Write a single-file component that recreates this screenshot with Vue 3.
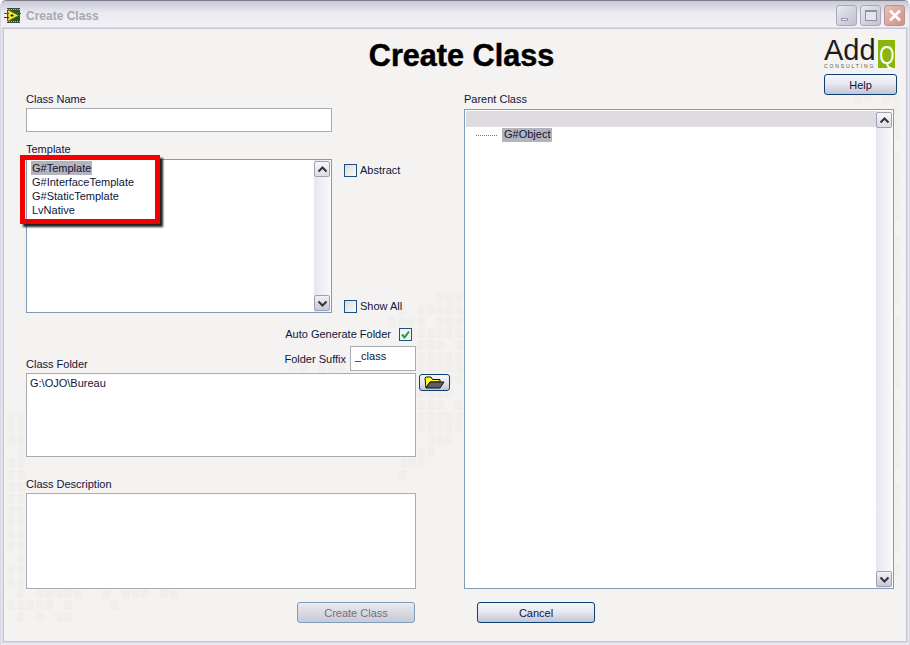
<script setup>
// faint square texture of the dialog background, on a 9.5 x 11.8 px grid
const ORIGIN_X = 4
const ORIGIN_Y = 29
const cells = [
  [98, [858, 868, 887, 896]],
  [298, [440, 449, 459]],
  [310, [402, 421, 431, 440, 449, 459]],
  [322, [392, 402, 411, 421, 440, 449, 459]],
  [333, [411, 421, 431, 440, 449, 459]],
  [345, [421, 431, 440, 459]],
  [357, [421, 431, 440, 449, 459]],
  [368, [293, 303, 322, 332, 341, 421, 431, 440, 449, 459]],
  [380, [449, 459]],
  [393, [421, 431, 440, 449]],
  [405, [421, 431, 440, 459]],
  [417, [11, 21, 421, 431, 440, 449, 459]],
  [428, [11, 21, 421, 431, 440, 449, 459]],
  [440, [11, 21, 431, 440, 449]],
  [452, [21, 421, 431]],
  [463, [11, 21, 403, 412, 421]],
  [475, [11, 21, 403]],
  [487, [11, 21]],
  [499, [11, 21]],
  [511, [11, 21]],
  [522, [11, 21]],
  [534, [11, 21]],
  [546, [11, 21]],
  [558, [21]],
  [570, [11, 21]],
  [582, [11, 21]],
  [593, [21, 40, 49, 59, 68, 78, 106, 126, 136, 145, 164, 174]],
  [605, [11, 21, 30, 40, 49, 68, 115]],
  [617, [21, 40, 59, 68]]
]
const squares = []
for (const [cy, xs] of cells) {
  for (const cx of xs) squares.push({ x: cx - 4 - ORIGIN_X, y: cy - 5 - ORIGIN_Y })
}
for (let m = 0; m < 40; m++) {
  if (m % 7 !== 3) squares.push({ x: 896 - 4 - ORIGIN_X, y: 110 + m * 11.8 - 5 - ORIGIN_Y })
}
</script>

<template>
  <div class="window">
    <header class="titlebar">
      <svg class="appicon" width="17" height="15" viewBox="0 0 17 15">
        <rect x="3" y="0" width="13" height="15" fill="#444" />
        <path d="M3 1.5 H16 M3 13.5 H16" stroke="#bbb" stroke-width="1" stroke-dasharray="1 1" />
        <rect x="4" y="2" width="11" height="11" fill="#2a5a20" />
        <path d="M4 2 L14.5 7.5 L4 13 Z" fill="#f4e53a" stroke="#8a7c00" stroke-width=".6" />
        <path d="M0 5.5 H5 M12 5.5 H17" stroke="#e01010" stroke-width="1.2" />
        <path d="M0 9.5 H5" stroke="#1020e0" stroke-width="1.2" />
        <path d="M6.5 7.5 H9.5 M8 6 V9" stroke="#222" stroke-width="1" />
      </svg>
      <span class="wintitle">Create Class</span>
      <div class="winbuttons">
        <span class="winbtn"><i class="min"></i></span>
        <span class="winbtn"><i class="max"></i></span>
        <span class="winbtn close">
          <svg width="14" height="13" viewBox="0 0 14 13"><path d="M2 1.5 L12 11.5 M12 1.5 L2 11.5" stroke="#fff" stroke-width="2.6" /></svg>
        </span>
      </div>
    </header>

    <main class="client">
      <svg class="pattern" width="902" height="613">
        <rect v-for="(s, i) in squares" :key="i" :x="s.x" :y="s.y" width="8" height="10" rx="1" fill="#f0efec" />
      </svg>

      <div class="top">
        <h1>Create Class</h1>
        <div class="brand">
          <div class="logo">
            <div class="logo-word">
              <span class="add">Add</span>
              <span class="consulting">CONSULTING</span>
            </div>
            <div class="q"><span>Q</span></div>
          </div>
          <button class="btn help">Help</button>
        </div>
      </div>

      <div class="form">
        <section class="left">
          <label class="lbl">Class Name</label>
          <div class="input name"></div>

          <label class="lbl tpl-label">Template</label>
          <div class="tpl-row">
            <div class="list">
              <ul>
                <li><span class="sel">G#Template</span></li>
                <li>G#InterfaceTemplate</li>
                <li>G#StaticTemplate</li>
                <li>LvNative</li>
              </ul>
              <div class="scroll">
                <span class="sbtn"><svg width="11" height="7" viewBox="0 0 11 7"><path d="M1.5 5.5 L5.5 1.5 L9.5 5.5" fill="none" stroke="#333" stroke-width="2" /></svg></span>
                <span class="sbtn down"><svg width="11" height="7" viewBox="0 0 11 7"><path d="M1.5 1.5 L5.5 5.5 L9.5 1.5" fill="none" stroke="#333" stroke-width="2" /></svg></span>
              </div>
              <div class="callout"></div>
            </div>
            <div class="side">
              <div class="check"><span class="box"></span><span>Abstract</span></div>
              <div class="check"><span class="box"></span><span>Show All</span></div>
            </div>
          </div>

          <div class="folder-opts">
            <div class="auto">
              <span>Auto Generate Folder</span>
              <span class="box checked">
                <svg width="11" height="11" viewBox="0 0 11 11"><path d="M2 5.5 L4.5 8.5 L9 2.5" fill="none" stroke="#1f9a3a" stroke-width="2" /></svg>
              </span>
            </div>
            <div class="suffix-row">
              <label class="lbl">Class Folder</label>
              <div class="suffix">
                <span>Folder Suffix</span>
                <div class="input suffix-input">_class</div>
              </div>
            </div>
          </div>

          <div class="folder-row">
            <div class="input folder">G:\OJO\Bureau</div>
            <button class="btn browse">
              <svg width="21" height="13" viewBox="0 0 21 13">
                <path d="M2 12 L1 2 L2 1 H7 L8.5 3.5 H16 V6 H6 Z" fill="#ffff20" stroke="#111" stroke-width="1" />
                <path d="M2 12 L6 6 H20 L16 12 Z" fill="#5f5f5f" stroke="#111" stroke-width="1" />
              </svg>
            </button>
          </div>

          <label class="lbl desc-label">Class Description</label>
          <div class="input desc"></div>

          <div class="create-row"><button class="btn disabled">Create Class</button></div>
        </section>

        <section class="right">
          <label class="lbl">Parent Class</label>
          <div class="tree">
            <div class="tree-body">
              <div class="tree-head"></div>
              <div class="node"><span class="dots"></span><span class="sel">G#Object</span></div>
            </div>
            <div class="scroll">
              <span class="sbtn"><svg width="11" height="7" viewBox="0 0 11 7"><path d="M1.5 5.5 L5.5 1.5 L9.5 5.5" fill="none" stroke="#333" stroke-width="2" /></svg></span>
              <span class="sbtn down"><svg width="11" height="7" viewBox="0 0 11 7"><path d="M1.5 1.5 L5.5 5.5 L9.5 1.5" fill="none" stroke="#333" stroke-width="2" /></svg></span>
            </div>
          </div>
          <div class="cancel-row"><button class="btn">Cancel</button></div>
        </section>
      </div>
    </main>
  </div>
</template>

<style>
html, body { margin: 0; background: #fff; }
</style>

<style scoped>
* { box-sizing: border-box; }
.window {
  width: 910px; height: 645px; display: flex; flex-direction: column; overflow: hidden;
  font: 11px "Liberation Sans", Arial, sans-serif; color: #10153a;
  background: #e9e9f0; border-radius: 6px 6px 0 0; border: 1px solid #d8d8e4; border-top-color: #7f7f8c; border-bottom: 0;
}
.titlebar {
  height: 27px; flex: none; display: flex; align-items: center; padding-left: 3px; padding-right: 4px;
  background: linear-gradient(#c9c9d6, #ebebf1 45%, #f1f1f5);
}
.appicon { flex: none; margin-top: 1px; }
.wintitle { margin-left: 5px; margin-top: 2px; font: bold 12px "Liberation Sans", sans-serif; color: #a8a8b0; }
.winbuttons { margin-left: auto; display: flex; gap: 3px; margin-top: 1px; }
.winbtn {
  width: 21px; height: 21px; border: 1px solid #a8a8b8; border-radius: 3px; display: flex; align-items: center; justify-content: center;
  background: linear-gradient(135deg, #e8e8f0, #c0c0d0);
}
.winbtn.close { border-color: #b89090; background: linear-gradient(135deg, #e8c0b8, #d09088); }
.min { width: 7px; height: 3px; background: #f0f0f4; border: 1px solid #9898a8; margin-top: 8px; margin-left: -4px; }
.max { width: 12px; height: 11px; border: 1px solid #9090a4; border-top-width: 2px; background: #e4e4ee; }
.client {
  position: relative; flex: 1; margin: 0 2px 3px 2px; background: #f4f3f1; border: 1px solid #c6c6d8; padding: 0 9px 0 22px;
  box-shadow: 0 0 0 1px #d8d8e6;
}
.pattern { position: absolute; left: 0; top: 0; pointer-events: none; }
.top { position: relative; height: 64px; display: flex; justify-content: center; }
h1 { margin: 9px 0 0; font: bold 30.6px/34px "Liberation Sans", sans-serif; color: #000; -webkit-text-stroke: .5px #000; position: relative; }
.brand { position: absolute; right: 0; top: 11px; width: 73px; display: flex; flex-direction: column; }
.logo { display: flex; gap: 3px; height: 28px; justify-content: flex-end; margin-right: 2px; }
.logo-word { width: 51px; height: 28px; color: #1c1c1c; }
.add { display: block; font: 29px/21px "Liberation Sans", sans-serif; }
.consulting { display: block; margin-top: 2px; font: 5px/6px "Liberation Sans", sans-serif; letter-spacing: 1.9px; color: #555; white-space: nowrap; }
.q { width: 17px; height: 28px; background: #8ab50c; color: #fff; display: flex; justify-content: center; overflow: visible; }
.q span { display: block; font: 25px/28px "Liberation Sans", sans-serif; transform: scaleX(.78); margin-top: 1px; }
.btn {
  display: block; width: 118px; height: 21px; padding: 0; border: 1px solid #0e3f72; border-radius: 3px; font: 11px "Liberation Sans", sans-serif; color: #10153a;
  background: linear-gradient(#f6f6fa, #e6e6ef 50%, #c2c4d8);
}
.help { width: 73px; height: 21px; margin-top: 6px; }
.form { position: relative; display: grid; grid-template-columns: 390px 430px; column-gap: 48px; }
.left, .right { display: flex; flex-direction: column; }
.lbl { display: block; line-height: 13px; white-space: nowrap; }
.input { background: #fff; border: 1px solid #a8adb4; padding: 2px 4px; }
.name { width: 306px; height: 24px; margin-top: 2px; }
.tpl-label { margin-top: 11px; }
.tpl-row { display: flex; margin-top: 3px; height: 154px; }
.list { position: relative; width: 306px; display: flex; background: #fff; border: 1px solid #7f9db9; }
ul { list-style: none; margin: 0; padding: 1px 0 0 5px; flex: 1; }
li { height: 14px; line-height: 14px; }
.sel { background: #b4b4bc; padding: 0 1px; margin-left: -1px; display: inline-block; height: 14px; }
.scroll { width: 17px; flex: none; display: flex; flex-direction: column; justify-content: space-between; background: linear-gradient(90deg, #e6e6f0, #fafafc); padding: 1px 0; }
.sbtn { width: 16px; height: 16px; border: 1px solid #a0a0b0; border-radius: 2px; display: flex; align-items: center; justify-content: center; background: linear-gradient(#f8f8fa, #dcdce8); }
.sbtn.down { background: linear-gradient(#f0f0f6, #c8c8d8); }
.callout { position: absolute; left: -7px; top: -5px; width: 140px; height: 69px; border: 5px solid #f20000; box-shadow: 3px 3px 2px #222; }
.side { margin-left: 12px; padding: 4px 0 0; display: flex; flex-direction: column; justify-content: space-between; }
.check { display: flex; align-items: center; gap: 3px; height: 14px; }
.box { width: 13px; height: 13px; flex: none; border: 1px solid #1c5180; background: linear-gradient(135deg, #dcdcd6, #fbfbfa); display: flex; align-items: center; justify-content: center; }
.box.checked { background: #f4f3f1; }
.folder-opts { position: relative; margin-top: 15px; }
.auto { display: flex; justify-content: flex-end; gap: 8px; height: 13px; line-height: 13px; padding-right: 4px; }
.suffix-row { display: flex; justify-content: space-between; align-items: flex-end; margin-top: 5px; }
.suffix { display: flex; align-items: center; gap: 4px; }
.suffix-input { width: 66px; height: 25px; line-height: 15px; }
.folder-row { display: flex; gap: 3px; margin-top: 2px; }
.folder { width: 390px; height: 84px; flex: none; padding: 3px 3px; }
.browse { width: 31px; height: 17px; margin-top: 1px; flex: none; display: flex; align-items: center; justify-content: center; }
.desc-label { margin-top: 21px; }
.desc { width: 390px; height: 96px; margin-top: 2px; }
.create-row { margin-top: 13px; display: flex; justify-content: flex-end; padding-right: 1px; }
.disabled { border-color: #7f9db9; color: #72727e; background: linear-gradient(#ececf0, #d8dae0 50%, #c8cad8); }
.tree { height: 480px; margin-top: 3px; display: flex; background: #fff; border: 1px solid #7f9db9; padding: 1px 0 0 1px; }
.tree-body { flex: 1; }
.tree-head { height: 16px; background: #dedce0; }
.node { display: flex; align-items: center; margin-top: 1px; height: 14px; padding-left: 10px; }
.dots { width: 21px; margin-right: 5px; border-top: 1px dotted #777; }
.node .sel { padding: 0 2px; margin-left: 0; }
.cancel-row { margin-top: 13px; padding-left: 13px; }
</style>
